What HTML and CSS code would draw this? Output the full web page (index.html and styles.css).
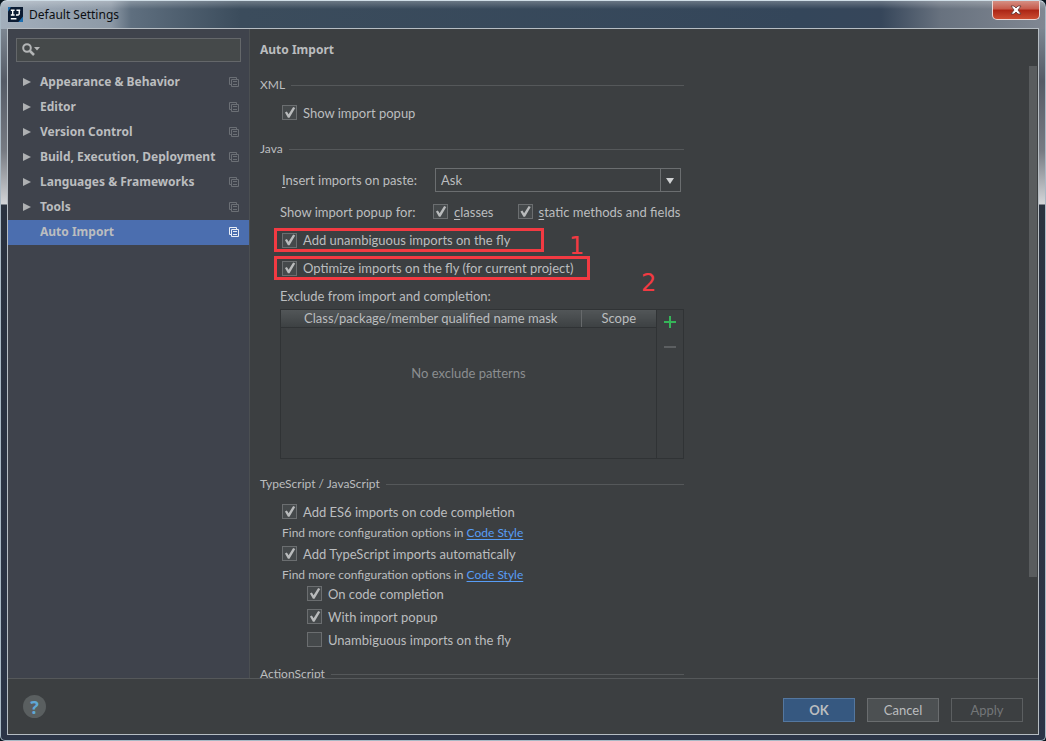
FILE: index.html
```html
<!DOCTYPE html>
<html lang="en">
<head>
<meta charset="utf-8">
<meta name="viewport" content="width=device-width, initial-scale=1">
<title>Default Settings</title>
<link rel="stylesheet" href="styles.css">
</head>
<body>
<svg class="defs" width="0" height="0" aria-hidden="true">
  <symbol id="scope" viewBox="0 0 10 10">
    <path d="M2.5 7.5H.5V.5h7v2M2.5 2.5h7v7h-7zM4 4.500h4M4 7.500h4" fill="none" stroke="currentColor"/>
  </symbol>
  <symbol id="arrow" viewBox="0 0 8 8"><path d="M0 0l8 4-8 4z" fill="currentColor"/></symbol>
</svg>
<div class="window">
  <header class="titlebar">
    <svg class="logo" viewBox="0 0 16 16" aria-hidden="true">
      <path d="M0 0h16v16H0z" fill="#0c1c33"/><path d="M0 0h3L0 5zM16 10v6h-5z" fill="#1e6fb0"/>
      <path d="M3 3.500h4M5 3.500v5M3 8.500h4M9 3.500h4M12 3v4q0 2-3.500 1.500M3 12.500h6" fill="none" stroke="#fff" stroke-width="1.500"/>
    </svg>
    <span class="title">Default Settings</span>
    <button class="close" type="button" aria-label="Close">
      <svg viewBox="0 0 12 10" aria-hidden="true"><path d="M1 1h3l2 2 2-2h3L8 5l3 4H8L6 7 4 9H1l3-4z" fill="#fff" stroke="#5a3535" stroke-width=".8"/></svg>
    </button>
  </header>
  <div class="client">
    <div class="panes">
      <nav class="sidebar">
        <div class="search">
          <svg viewBox="0 0 18 14" aria-hidden="true"><circle cx="5" cy="5" r="3.800" fill="none" stroke="#b4b6b7" stroke-width="2"/><path d="M8 8l4 4" stroke="#b4b6b7" stroke-width="2.500"/><path d="M12 4h6l-3 3.500z" fill="#b4b6b7"/></svg>
          <input type="text" aria-label="Search settings">
        </div>
        <ul class="tree">
          <li><svg class="tri"><use href="#arrow"/></svg><span>Appearance &amp; Behavior</span><svg class="scope"><use href="#scope"/></svg></li>
          <li><svg class="tri"><use href="#arrow"/></svg><span>Editor</span><svg class="scope"><use href="#scope"/></svg></li>
          <li><svg class="tri"><use href="#arrow"/></svg><span>Version Control</span><svg class="scope"><use href="#scope"/></svg></li>
          <li><svg class="tri"><use href="#arrow"/></svg><span>Build, Execution, Deployment</span><svg class="scope"><use href="#scope"/></svg></li>
          <li><svg class="tri"><use href="#arrow"/></svg><span>Languages &amp; Frameworks</span><svg class="scope"><use href="#scope"/></svg></li>
          <li><svg class="tri"><use href="#arrow"/></svg><span>Tools</span><svg class="scope"><use href="#scope"/></svg></li>
          <li class="selected"><i class="tri"></i><span>Auto Import</span><svg class="scope"><use href="#scope"/></svg></li>
        </ul>
      </nav>
      <main class="main">
        <div class="content">
          <h1>Auto Import</h1>
          <section>
            <h2>XML</h2>
            <div class="body">
              <label class="check"><input type="checkbox" checked>Show import popup</label>
            </div>
          </section>
          <section>
            <h2>Java</h2>
            <div class="body java">
              <div class="paste">
                <label for="paste"><u>I</u>nsert imports on paste:</label>
                <div class="combo">
                  <select id="paste"><option>Ask</option></select>
                  <svg viewBox="0 0 8 6" aria-hidden="true"><path d="M0 0h8L4 6z" fill="#d0d2d3"/></svg>
                </div>
              </div>
              <div class="popup">
                <span>Show import popup for:</span>
                <label class="check"><input type="checkbox" checked><span><u>c</u>lasses</span></label>
                <label class="check"><input type="checkbox" checked><span><u>s</u>tatic methods and fields</span></label>
              </div>
              <div class="marked first">
                <label class="check"><input type="checkbox" checked>Add unambiguous imports on the fly</label>
                <span class="mark">1</span>
              </div>
              <div class="marked second">
                <label class="check"><input type="checkbox" checked>Optimize imports on the fly (for current project)</label>
                <span class="mark">2</span>
              </div>
              <div class="caption">Exclude from import and completion:</div>
              <div class="exclude">
                <table>
                  <thead><tr><th>Class/package/member qualified name mask</th><th class="narrow">Scope</th></tr></thead>
                  <tbody><tr><td colspan="2">No exclude patterns</td></tr></tbody>
                </table>
                <div class="tools">
                  <button type="button" aria-label="Add"><svg viewBox="0 0 12 12" aria-hidden="true"><path d="M0 6h12M6 0v12" stroke="#35b558" stroke-width="2"/></svg></button>
                  <button type="button" aria-label="Remove" disabled><svg viewBox="0 0 12 12" aria-hidden="true"><path d="M0 6h12" stroke="#5c5f61" stroke-width="2"/></svg></button>
                </div>
              </div>
            </div>
          </section>
          <section>
            <h2>TypeScript / JavaScript</h2>
            <div class="body">
              <label class="check"><input type="checkbox" checked>Add ES6 imports on code completion</label>
              <p>Find more configuration options in <a href="#">Code Style</a></p>
              <label class="check"><input type="checkbox" checked>Add TypeScript imports automatically</label>
              <p>Find more configuration options in <a href="#">Code Style</a></p>
              <div class="nested">
                <label class="check"><input type="checkbox" checked>On code completion</label>
                <label class="check"><input type="checkbox" checked>With import popup</label>
                <label class="check"><input type="checkbox">Unambiguous imports on the fly</label>
              </div>
            </div>
          </section>
          <section><h2>ActionScript</h2></section>
        </div>
        <div class="track"><div class="thumb"></div></div>
      </main>
    </div>
    <footer class="footer">
      <button class="help" type="button" aria-label="Help">?</button>
      <button class="btn primary" type="button">OK</button>
      <button class="btn" type="button">Cancel</button>
      <button class="btn" type="button" disabled>Apply</button>
    </footer>
  </div>
</div>
</body>
</html>
```
FILE: styles.css
```css
* { box-sizing: border-box; }
body {
  margin: 0;
  background: #07131d;
  color: #bbbdbf;
  font: 13px/18px Lato, "Open Sans", sans-serif;
}
button, input, select { font: inherit; color: inherit; }
h1, h2, p, ul { margin: 0; padding: 0; }
.defs { position: absolute; }

/* Window frame */
.window {
  display: flex;
  flex-direction: column;
  height: 100vh;
  padding: 0 7px 5px;
  border: 1px solid #a9b9c5;
  border-top-color: #cfdde6;
  border-radius: 7px 7px 5px 5px;
  background:
    linear-gradient(#ffffff40, #ffffff00 8px) top / 100% 28px no-repeat,
    linear-gradient(90deg, #a3afbc 0, #8d99a6 110px, #5f6f7f 130px, #3b4c5c 240px, #34465a 800px, #36465a 880px, #68727f 940px, #808792 100%) top / 100% 28px no-repeat,
    linear-gradient(#929da8, #555b66 80px, #777b83 150px, #d3d5d8 203px, #2a323f 204px, #2c3547);
}
.titlebar { flex: none; display: flex; align-items: center; gap: 6px; height: 27px; }
.logo { width: 15px; height: 15px; }
.title { flex: 1; color: #0c0f12; font-family: "Noto Sans", sans-serif; font-size: 12px; }
.close {
  align-self: flex-start;
  display: grid;
  place-items: center;
  width: 48px;
  height: 19px;
  margin-right: -2px;
  padding: 0;
  border: 1px solid #ecd6d3;
  border-top: 0;
  border-radius: 0 0 5px 5px;
  background: linear-gradient(#d58f83, #c6594a 45%, #ab2414 50%, #cb4d32);
}
.close svg { width: 12px; height: 10px; }
.client {
  flex: 1;
  min-height: 0;
  display: flex;
  flex-direction: column;
  margin: 0 -1px;
  border: 1px solid #b6bdc3;
  background: #3c3f41;
}
.panes { flex: 1; min-height: 0; display: flex; }

/* Category tree */
.sidebar { flex: none; width: 242px; padding-top: 9px; border-right: 1px solid #4b4f52; background: #3f434c; }
.search {
  display: flex;
  align-items: center;
  height: 24px;
  margin: 0 8px 8px;
  padding-left: 5px;
  border: 1px solid #64676a;
  background: #45494a;
}
.search svg { flex: none; width: 18px; height: 14px; }
.search input { flex: 1; min-width: 0; border: 0; outline: 0; background: none; }
.tree { list-style: none; font: 700 12px/18px "Noto Sans", sans-serif; }
.tree li { display: flex; align-items: center; height: 25px; padding: 0 10px 2px 15px; }
.tree span { flex: 1; white-space: nowrap; }
.tree .tri { flex: none; width: 8px; height: 8px; margin-right: 9px; color: #aeb0b2; }
.tree .scope { flex: none; width: 10px; height: 10px; color: #6b6f75; }
.tree .selected { background: #4b6eaf; }
.tree .selected .scope { color: #e8edf5; }

/* Settings page */
.main { flex: 1; min-width: 0; display: flex; overflow: hidden; }
.content { flex: 1; padding-left: 10px; }
.content h1 { font: 700 12px/42px "Noto Sans", sans-serif; }
section { max-width: 424px; padding-bottom: 9px; }
h2 { display: flex; align-items: center; gap: 6px; font-size: 12px; font-weight: 400; line-height: 28px; }
h2::after { content: ""; flex: 1; height: 1px; background: #55585a; }
.body { padding-left: 22px; }
.check { display: flex; align-items: center; gap: 6px; height: 27px; white-space: nowrap; }
.check input {
  appearance: none;
  flex: none;
  width: 15px;
  height: 15px;
  margin: 0;
  border: 1px solid #6b6e70;
  background: #45494b;
}
.check input:checked::before {
  content: "";
  display: block;
  height: 13px;
  background: #b9bbbc;
  clip-path: polygon(15% 50%, 30% 42%, 43% 64%, 78% 8%, 94% 15%, 50% 90%, 38% 90%);
}
u { text-underline-offset: 2px; }
.java { padding: 5px 0 0 20px; }
.paste { display: flex; align-items: center; justify-content: space-between; padding: 0 3px 0 2px; }
.combo { position: relative; width: 246px; }
.combo select {
  display: block;
  appearance: none;
  width: 100%;
  height: 24px;
  padding: 0 5px;
  border: 1px solid #6b6e70;
  border-radius: 0;
  background: linear-gradient(#6b6e70, #6b6e70) right 19px top / 1px 100% no-repeat, #3c3f41;
}
.combo svg { position: absolute; right: 7px; top: 10px; width: 8px; height: 6px; pointer-events: none; }
.popup { display: flex; align-items: center; height: 36px; padding-top: 3px; white-space: nowrap; }
.popup > span { flex: none; width: 153px; }
.popup .check + .check { margin-left: 24px; }
.marked { position: relative; width: 270px; margin: 0 0 4px -6px; padding-left: 5px; border: 3px solid #f23a42; }
.marked.second { width: 316px; margin-bottom: 3px; }
.marked .check { height: 18px; }
.mark { position: absolute; color: #f23a42; font: 24px/28px "DejaVu Sans", sans-serif; }
.first .mark { left: 292px; top: 1px; }
.second .mark { left: 364px; top: 10px; }
.caption { line-height: 26px; }
.exclude { display: flex; height: 150px; margin-bottom: 2px; border: 1px solid #303335; }
table { flex: 1; border-collapse: collapse; table-layout: fixed; }
th { height: 17px; padding: 0; background: linear-gradient(#525658, #3d4143); border-bottom: 1px solid #303335; font-weight: 400; line-height: 16px; }
.narrow { width: 75px; border-left: 1px solid #66696b; }
td { padding: 0 0 40px; color: #8b8e90; text-align: center; }
.tools { width: 27px; border-left: 1px solid #303335; }
.tools button { display: grid; place-items: center; width: 25px; height: 25px; padding: 0 0 2px; border: 0; background: none; }
.tools svg { width: 12px; height: 12px; }
p { font-size: 12px; line-height: 15px; }
a { color: #589df6; text-underline-offset: 2px; }
.nested { padding-left: 25px; }
.nested .check { height: 23px; }
.track { flex: none; width: 9px; padding: 37px 1px 101px 0; }
.thumb { height: 100%; background: #595c5e; }

/* Dialog buttons */
.footer { flex: none; display: flex; align-items: center; gap: 12px; height: 56px; padding: 6px 15px 0; border-top: 1px solid #55585a; }
.help { width: 23px; height: 23px; margin: 0 auto 6px 0; padding: 0; border: 0; border-radius: 50%; background: #5a5f60; color: #5fa8d6; font: 700 18px/22px "Open Sans", sans-serif; }
.btn { width: 72px; height: 24px; padding: 0; border: 1px solid #6a6d6f; background: #4c5052; }
.primary { background: #365880; border-color: #54779f; font-weight: 700; }
.btn:disabled { background: none; border-color: #5c5f61; color: #737678; }
```
